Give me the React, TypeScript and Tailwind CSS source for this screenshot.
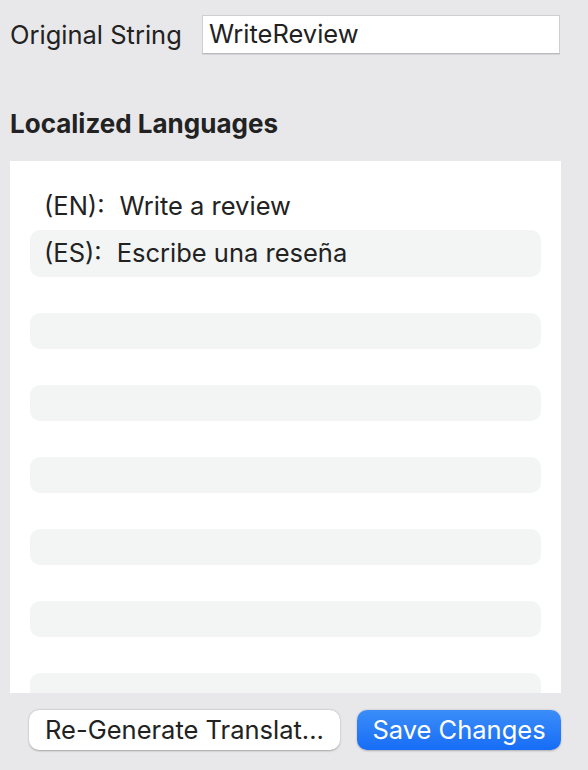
import React from 'react';

const rows = [
  { code: 'EN', text: 'Write a review' },
  { code: 'ES', text: 'Escribe una reseña' },
];

export default function App() {
  const empties = Array.from({ length: 13 });

  return (
    <div className="w-[588px] h-[770px] bg-[#e8e8ea] text-[#222] font-['Inter','Helvetica',sans-serif] flex flex-col overflow-hidden">
      {/* Original string */}
      <div className="flex items-center pl-[10px] pt-[15px]">
        <span className="w-[192px] text-[25.5px] leading-none">Original String</span>
        <div className="w-[358px] h-[39px] bg-white border border-[#cfcfd1] border-b-[#b9b9bb] shadow-[0_1px_0_rgba(0,0,0,0.08)] flex items-center px-[6px] text-[25.5px]">
          WriteReview
        </div>
      </div>

      <h2 className="mt-[57px] ml-[10px] h-[26px] text-[26px] font-bold leading-none">Localized Languages</h2>

      {/* List */}
      <div className="mt-[24px] ml-[10px] w-[551px] h-[532px] shrink-0 bg-white overflow-hidden pt-[22px] px-[20px]">
        {rows.map((r, i) => (
          <div
            key={r.code}
            className={`h-[47px] rounded-[10px] flex items-center gap-[15px] pl-[14px] text-[25.5px] ${i % 2 === 1 ? 'bg-[#f3f4f4]' : ''}`}
          >
            <span>({r.code}):</span>
            <span>{r.text}</span>
          </div>
        ))}
        {empties.map((_, i) => (
          <div key={i} className={`h-[36px] rounded-[10px] ${i % 2 === 1 ? 'bg-[#f3f4f4]' : ''}`} />
        ))}
      </div>

      {/* Actions */}
      <div className="mt-[17px] flex items-center gap-[17px] pl-[29px]">
        <button className="w-[311px] h-[40px] rounded-[10px] bg-white text-[25.5px] text-[#222] shadow-[0_0.5px_2px_rgba(0,0,0,0.3)] flex items-center justify-center">
          Re-Generate Translat...
        </button>
        <button className="w-[204px] h-[40px] rounded-[10px] bg-gradient-to-b from-[#3b8df8] to-[#166cf6] text-[25.5px] text-white shadow-[0_0.5px_2px_rgba(0,0,0,0.25)] flex items-center justify-center">
          Save Changes
        </button>
      </div>
    </div>
  );
}
